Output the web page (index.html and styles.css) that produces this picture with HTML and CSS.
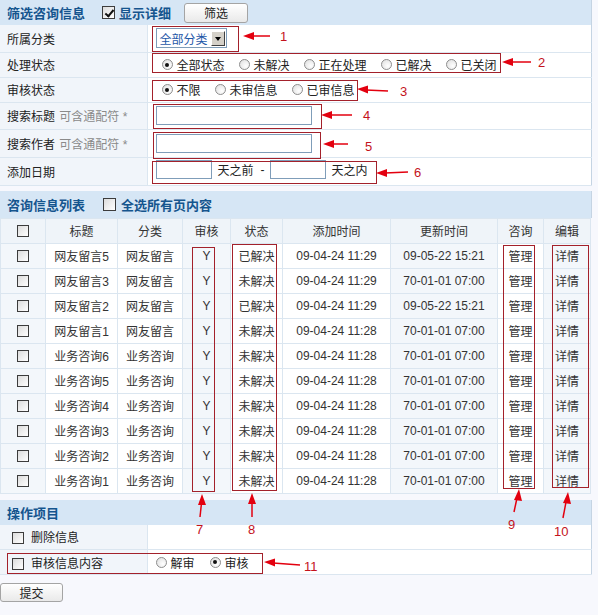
FILE: index.html
```html
<!DOCTYPE html>
<html lang="zh-CN">
  <head>
    <meta charset="UTF-8" />
    <title>咨询信息管理</title>
    <link rel="stylesheet" href="styles.css">
  </head>

  <body>
    <div class="page">
      <div class="bar">
        <span class="bar-title">筛选咨询信息</span>
        <span class="chk checked"></span>
        <span class="bar-title">显示详细</span>
        <button class="btn btn-filter">筛选</button>
      </div>

      <table class="form">
        <tr class="h27">
          <td class="label">所属分类</td>
          <td>
            <span class="select">
              <span class="select-text">全部分类</span>
              <span class="select-btn"></span>
            </span>
          </td>
        </tr>
        <tr class="h25">
          <td class="label">处理状态</td>
          <td>
            <span class="radios">
              <span class="opt"><span class="radio on"></span>全部状态</span>
              <span class="opt"><span class="radio"></span>未解决</span>
              <span class="opt"><span class="radio"></span>正在处理</span>
              <span class="opt"><span class="radio"></span>已解决</span>
              <span class="opt"><span class="radio"></span>已关闭</span>
            </span>
          </td>
        </tr>
        <tr class="h25">
          <td class="label">审核状态</td>
          <td>
            <span class="radios">
              <span class="opt"><span class="radio on"></span>不限</span>
              <span class="opt"><span class="radio"></span>未审信息</span>
              <span class="opt"><span class="radio"></span>已审信息</span>
            </span>
          </td>
        </tr>
        <tr class="h27">
          <td class="label">搜索标题 <span class="hint">可含通配符 *</span></td>
          <td><span class="input wide"></span></td>
        </tr>
        <tr class="h28">
          <td class="label">搜索作者 <span class="hint">可含通配符 *</span></td>
          <td><span class="input wide"></span></td>
        </tr>
        <tr class="h28">
          <td class="label">添加日期</td>
          <td>
            <span class="dates">
              <span class="input short"></span>
              <span class="unit">天之前</span>
              <span class="dash">-</span>
              <span class="input short"></span>
              <span class="unit">天之内</span>
            </span>
          </td>
        </tr>
      </table>

      <div class="bar bar-list">
        <span class="bar-title">咨询信息列表</span>
        <span class="chk"></span>
        <span class="bar-title">全选所有页内容</span>
      </div>

      <table class="list">
        <colgroup>
          <col style="width: 45px" />
          <col style="width: 72px" />
          <col style="width: 65px" />
          <col style="width: 48px" />
          <col style="width: 52px" />
          <col style="width: 108px" />
          <col style="width: 107px" />
          <col style="width: 46px" />
          <col style="width: 47px" />
        </colgroup>
        <thead>
          <tr>
            <th><span class="chk"></span></th>
            <th>标题</th>
            <th>分类</th>
            <th>审核</th>
            <th>状态</th>
            <th>添加时间</th>
            <th>更新时间</th>
            <th>咨询</th>
            <th>编辑</th>
          </tr>
        </thead>
        <tbody id="rows"></tbody>
      </table>

      <div class="bar bar-ops">
        <span class="bar-title">操作项目</span>
      </div>

      <table class="form">
        <tr class="h25">
          <td class="label"><span class="chk"></span>删除信息</td>
          <td></td>
        </tr>
        <tr class="h25">
          <td class="label"><span class="chk"></span>审核信息内容</td>
          <td>
            <span class="radios audit">
              <span class="opt"><span class="radio"></span>解审</span>
              <span class="opt"><span class="radio on"></span>审核</span>
            </span>
          </td>
        </tr>
      </table>

      <button class="btn btn-submit">提交</button>

      <svg class="marks" width="598" height="615" viewBox="0 0 598 615">
        <g class="box">
          <rect x="152.5" y="26.5" width="86" height="25" />
          <rect x="152.5" y="53.5" width="348" height="19" />
          <rect x="152.5" y="80.5" width="205" height="20" />
          <rect x="153.5" y="104.5" width="168" height="24" />
          <rect x="153.5" y="132.5" width="167" height="26" />
          <rect x="152.5" y="161.5" width="224" height="22" />
          <rect x="192.5" y="247.5" width="22" height="244" />
          <rect x="232.5" y="244.5" width="44" height="246" />
          <rect x="503.5" y="245.5" width="31" height="243" />
          <rect x="552.5" y="245.5" width="36" height="242" />
          <rect x="7.5" y="553.5" width="255" height="20" />
        </g>
        <g class="arrow">
          <line x1="252" y1="36" x2="270" y2="36" />
          <polygon points="243,36 254,32 254,40" />
          <line x1="511" y1="62" x2="531" y2="62" />
          <polygon points="502,62 513,58 513,66" />
          <line x1="366" y1="90" x2="388" y2="91" />
          <polygon points="357,89 368,85.5 368,93.5" />
          <line x1="330" y1="115" x2="352" y2="115" />
          <polygon points="321,115 332,111 332,119" />
          <line x1="332" y1="144" x2="348" y2="144" />
          <polygon points="323,144 334,140 334,148" />
          <line x1="385" y1="173" x2="408" y2="172" />
          <polygon points="376,173 387,169 387,177" />
          <line x1="201.5" y1="503" x2="200" y2="517" />
          <polygon points="202,494 198,505 206,505" />
          <line x1="252" y1="502" x2="252" y2="517" />
          <polygon points="252,493 248,504 256,504" />
          <line x1="517" y1="498" x2="514" y2="512" />
          <polygon points="519,489 514,500 522,501" />
          <line x1="566" y1="502" x2="563" y2="518" />
          <polygon points="568,492 563,503 571,504" />
          <line x1="273" y1="563" x2="300" y2="565" />
          <polygon points="264,562 275,558.5 275,566.5" />
        </g>
        <g class="num">
          <text x="280" y="41">1</text>
          <text x="538" y="67">2</text>
          <text x="400" y="96">3</text>
          <text x="363" y="120">4</text>
          <text x="365" y="151">5</text>
          <text x="414" y="177">6</text>
          <text x="196" y="534">7</text>
          <text x="248" y="534">8</text>
          <text x="508" y="529">9</text>
          <text x="554" y="536">10</text>
          <text x="304" y="571">11</text>
        </g>
      </svg>
    </div>

    <script src="app.js"></script>
  </body>
</html>
```

FILE: styles.css
```css
* {
  box-sizing: border-box;
}

body {
  margin: 0;
  background-color: #f7f8fd;
  color: #222;
  font-family: 'Liberation Sans', 'Noto Sans CJK SC', sans-serif;
  font-size: 12px;
}

.page {
  position: relative;
  width: 598px;
  height: 615px;
}

.bar {
  width: 592px;
  height: 25px;
  background-color: #d6e6f5;
  border-right: 1px solid #c5d4e3;
  display: flex;
  align-items: center;
  padding-left: 7px;
}

.bar-title {
  color: #15558e;
  font-weight: 700;
  font-size: 13px;
}

.bar .chk {
  width: 13px;
  height: 13px;
  margin: 0 4px 0 17px;
}

.bar-list {
  height: 27px;
  margin-top: 5px;
}

.bar-list .chk {
  margin: 0 5px 0 18px;
}

.bar-ops {
  margin-top: 6px;
}

.btn {
  font-family: 'Liberation Sans', 'Noto Sans CJK SC', sans-serif;
  font-size: 12px;
  color: #222;
  background: linear-gradient(#ffffff, #e9e9e9);
  border: 1px solid #a4a4a4;
  border-radius: 3px;
  padding: 0;
  cursor: pointer;
}

.btn-filter {
  width: 64px;
  height: 20px;
  margin-left: 13px;
}

.btn-submit {
  display: block;
  width: 63px;
  height: 19px;
  margin-top: 8px;
}

/* filter form */
.form {
  width: 592px;
  border-collapse: collapse;
  background-color: #fff;
  border-right: 1px solid #c5d4e3;
}

.form td {
  border-bottom: 1px solid #dbe6f0;
  padding: 0;
  vertical-align: middle;
}

.form td.label {
  width: 147px;
  padding-left: 7px;
  background-color: #f1f5fa;
  border-right: 1px solid #dbe6f0;
  white-space: nowrap;
}

.form td:not(.label) {
  padding-left: 8px;
}

.h25 {
  height: 25px;
}

.h27 {
  height: 27px;
}

.h28 {
  height: 28px;
}

.hint {
  color: #8a8a8a;
  margin-left: 1px;
}

.label .chk {
  margin: 0 7px 0 5px;
  vertical-align: -2px;
}

.select {
  display: inline-flex;
  align-items: center;
  width: 71px;
  height: 20px;
  border: 1px solid #7f9db9;
  background-color: #fff;
  padding: 0 1px 0 3px;
  vertical-align: middle;
  overflow: hidden;
}

.select-text {
  flex: 1;
  color: #1f58a8;
  white-space: nowrap;
}

.select-btn {
  position: relative;
  flex: none;
  width: 14px;
  height: 15px;
  background-color: #d4d0c8;
  border: 1px solid;
  border-color: #fff #404040 #404040 #fff;
}

.select-btn::after {
  content: '';
  position: absolute;
  left: 3px;
  top: 5px;
  border-left: 3.5px solid transparent;
  border-right: 3.5px solid transparent;
  border-top: 4px solid #000;
}

.radios {
  display: inline-flex;
  align-items: center;
  gap: 14px;
  padding-left: 6px;
}

.audit {
  padding-left: 0;
  gap: 15px;
}

.opt {
  display: inline-flex;
  align-items: center;
  white-space: nowrap;
}

.radio {
  position: relative;
  display: inline-block;
  width: 11px;
  height: 11px;
  border-radius: 50%;
  border: 1px solid #8e8e8e;
  background: radial-gradient(circle at 65% 65%, #ffffff, #dcdcdc);
  margin-right: 4px;
}

.radio.on::after {
  content: '';
  position: absolute;
  left: 2.5px;
  top: 2.5px;
  width: 4px;
  height: 4px;
  border-radius: 50%;
  background-color: #111;
}

.chk {
  position: relative;
  display: inline-block;
  width: 12px;
  height: 12px;
  border: 1px solid #3c3c3c;
  background: linear-gradient(135deg, #dcdcdc, #ffffff);
}

.chk.checked::after {
  content: '';
  position: absolute;
  left: 3.5px;
  top: 0.5px;
  width: 3px;
  height: 7px;
  border: solid #111;
  border-width: 0 2px 2px 0;
  transform: rotate(40deg);
}

.input {
  display: inline-block;
  height: 19px;
  border: 1px solid #7f9db9;
  background-color: #fff;
  vertical-align: middle;
}

.wide {
  width: 156px;
}

.short {
  width: 56px;
}

.dates {
  display: inline-flex;
  align-items: center;
}

.unit {
  margin: 0 6px;
}

.dash {
  margin: 0 5px 0 1px;
}

/* list table */
.list {
  width: 591px;
  table-layout: fixed;
  border-collapse: collapse;
  background-color: #fff;
}

.list th,
.list td {
  height: 25px;
  padding: 0;
  text-align: center;
  border: 1px solid #dbe6f0;
  font-weight: 400;
  color: #333;
  white-space: nowrap;
}

.list th {
  background-color: #eff4f9;
}

.list td.tint {
  background-color: #f3f7fb;
}

.list .chk {
  vertical-align: -2px;
}

/* annotations drawn over the screenshot */
.marks {
  position: absolute;
  left: 0;
  top: 0;
  pointer-events: none;
}

.box rect {
  fill: none;
  stroke: #a3212b;
  stroke-width: 1;
}

.arrow line {
  stroke: #e3000f;
  stroke-width: 1.5;
}

.arrow polygon {
  fill: #e3000f;
}

.num text {
  fill: #c4121c;
  font-family: 'Liberation Sans', sans-serif;
  font-size: 13px;
}
```

FILE: app.js
```js
const rows = [
  ['网友留言5', '网友留言', '已解决', '09-04-24 11:29', '09-05-22 15:21'],
  ['网友留言3', '网友留言', '未解决', '09-04-24 11:29', '70-01-01 07:00'],
  ['网友留言2', '网友留言', '已解决', '09-04-24 11:29', '09-05-22 15:21'],
  ['网友留言1', '网友留言', '未解决', '09-04-24 11:28', '70-01-01 07:00'],
  ['业务咨询6', '业务咨询', '未解决', '09-04-24 11:28', '70-01-01 07:00'],
  ['业务咨询5', '业务咨询', '未解决', '09-04-24 11:28', '70-01-01 07:00'],
  ['业务咨询4', '业务咨询', '未解决', '09-04-24 11:28', '70-01-01 07:00'],
  ['业务咨询3', '业务咨询', '未解决', '09-04-24 11:28', '70-01-01 07:00'],
  ['业务咨询2', '业务咨询', '未解决', '09-04-24 11:28', '70-01-01 07:00'],
  ['业务咨询1', '业务咨询', '未解决', '09-04-24 11:28', '70-01-01 07:00'],
];

const tbody = document.getElementById('rows');

rows.forEach((r) => {
  const tr = document.createElement('tr');
  tr.innerHTML =
    '<td class="tint"><span class="chk"></span></td>' +
    `<td>${r[0]}</td>` +
    `<td>${r[1]}</td>` +
    '<td class="tint">Y</td>' +
    `<td>${r[2]}</td>` +
    `<td>${r[3]}</td>` +
    `<td class="tint">${r[4]}</td>` +
    '<td>管理</td>' +
    '<td class="tint">详情</td>';
  tbody.appendChild(tr);
});
```
